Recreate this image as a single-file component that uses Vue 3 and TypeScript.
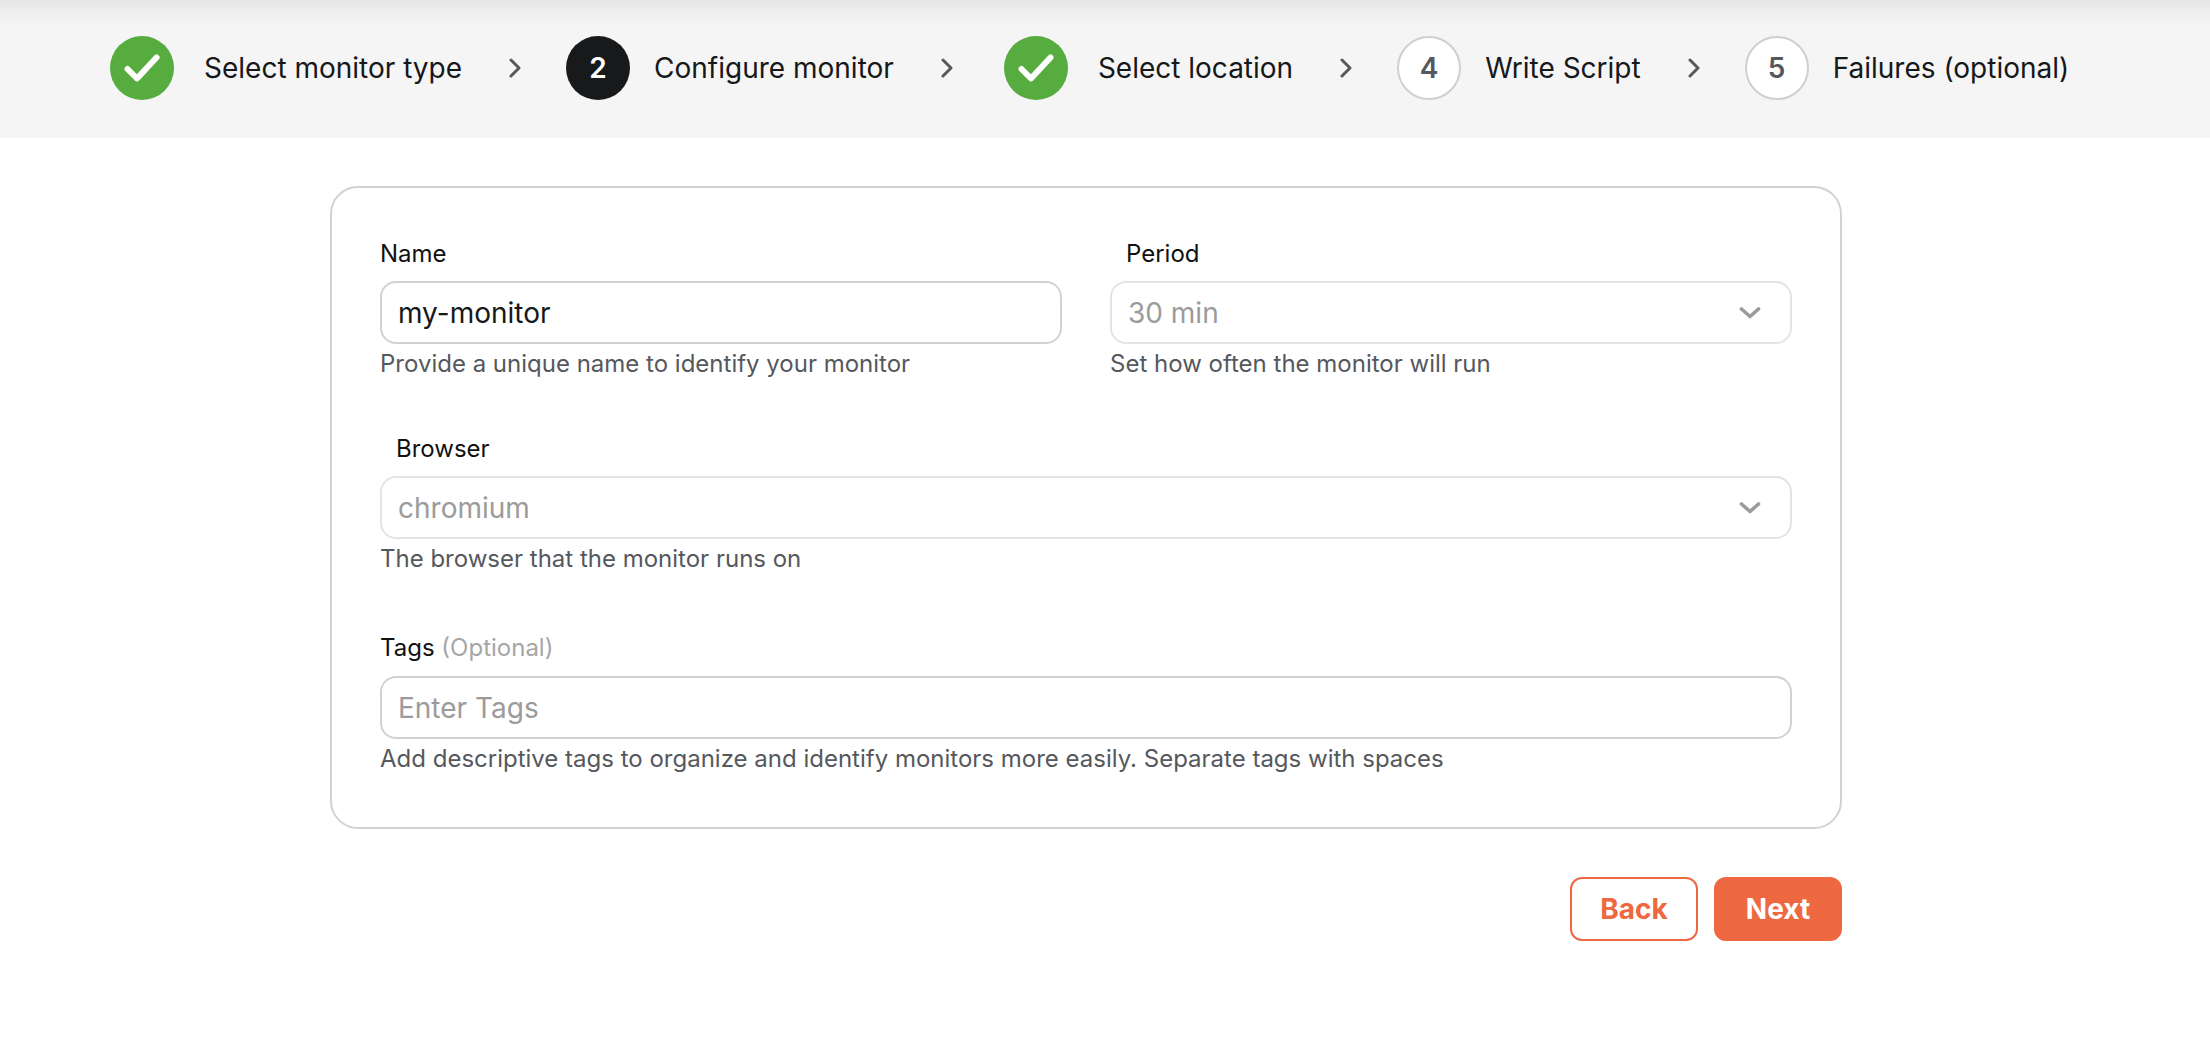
<script setup lang="ts">
interface Step {
  label: string;
  num: number;
  state: 'done' | 'active' | 'todo';
}

const steps: Step[] = [
  { label: 'Select monitor type', num: 1, state: 'done' },
  { label: 'Configure monitor', num: 2, state: 'active' },
  { label: 'Select location', num: 3, state: 'done' },
  { label: 'Write Script', num: 4, state: 'todo' },
  { label: 'Failures (optional)', num: 5, state: 'todo' },
];
</script>

<template>
  <div class="page">
    <header class="stepper">
      <template v-for="(step, i) in steps" :key="step.num">
        <div class="step" :class="step.state">
          <span class="badge">
            <svg v-if="step.state === 'done'" width="36" height="28" viewBox="0 0 36 28" fill="none">
              <path d="M3.5 15 L13 24.5 L32.5 3.5" stroke="#fff" stroke-width="6" stroke-linecap="round" stroke-linejoin="round" />
            </svg>
            <template v-else>{{ step.num }}</template>
          </span>
          <span class="step-label">{{ step.label }}</span>
        </div>
        <svg v-if="i < steps.length - 1" class="chevron" width="12" height="20" viewBox="0 0 12 20" fill="none">
          <path d="M2 2 L10 10 L2 18" stroke="#55585d" stroke-width="3" stroke-linecap="round" stroke-linejoin="round" />
        </svg>
      </template>
    </header>

    <main class="content">
      <section class="card">
        <div class="row two">
          <div class="field">
            <label class="label">Name</label>
            <input class="control" type="text" value="my-monitor" />
            <p class="hint">Provide a unique name to identify your monitor</p>
          </div>
          <div class="field">
            <label class="label indent">Period</label>
            <div class="control select">
              <span>30 min</span>
              <svg width="22" height="14" viewBox="0 0 22 14" fill="none">
                <path d="M2.5 3 L11 10.5 L19.5 3" stroke="#9b9b9b" stroke-width="3.6" stroke-linecap="round" stroke-linejoin="round" />
              </svg>
            </div>
            <p class="hint">Set how often the monitor will run</p>
          </div>
        </div>

        <div class="field browser">
          <label class="label indent">Browser</label>
          <div class="control select">
            <span>chromium</span>
            <svg width="22" height="14" viewBox="0 0 22 14" fill="none">
              <path d="M2.5 3 L11 10.5 L19.5 3" stroke="#9b9b9b" stroke-width="3.6" stroke-linecap="round" stroke-linejoin="round" />
            </svg>
          </div>
          <p class="hint">The browser that the monitor runs on</p>
        </div>

        <div class="field tags">
          <label class="label">Tags <span class="optional">(Optional)</span></label>
          <input class="control" type="text" placeholder="Enter Tags" />
          <p class="hint">Add descriptive tags to organize and identify monitors more easily. Separate tags with spaces</p>
        </div>
      </section>

      <div class="actions">
        <button class="btn outline">Back</button>
        <button class="btn solid">Next</button>
      </div>
    </main>
  </div>
</template>

<style scoped>
.page {
  font-family: Inter, 'Liberation Sans', sans-serif;
  color: #161819;
  min-height: 1058px;
  background: #fff;
}
.stepper {
  height: 138px;
  box-sizing: border-box;
  padding: 0 0 2px 110px;
  display: flex;
  align-items: center;
  background: linear-gradient(#e5e5e5 0, #f0f0f0 14px, #f5f5f5 26px);
}
.step {
  display: flex;
  align-items: center;
  gap: 24px;
}
.step.done {
  gap: 30px;
}
.chevron + .step.done {
  margin-left: 6px;
}
.badge {
  width: 64px;
  height: 64px;
  box-sizing: border-box;
  border-radius: 50%;
  display: flex;
  align-items: center;
  justify-content: center;
  font-size: 28px;
  font-weight: 600;
}
.done .badge {
  background: #57ac3f;
}
.active .badge {
  background: #17191b;
  color: #fff;
}
.todo .badge {
  background: #fff;
  border: 2px solid #cfcfcf;
  color: #55585d;
}
.step-label {
  font-size: 28px;
  white-space: nowrap;
}
.chevron {
  margin: 0 45px 0 47px;
  flex: none;
}
.content {
  width: 1512px;
  margin: 48px 0 0 330px;
}
.card {
  box-sizing: border-box;
  height: 643px;
  border: 2px solid #d2d2d2;
  border-radius: 28px;
  padding: 51px 48px 0;
  display: flex;
  flex-direction: column;
}
.row.two {
  display: grid;
  grid-template-columns: 1fr 1fr;
  gap: 48px;
  margin-bottom: 55px;
}
.field {
  display: flex;
  flex-direction: column;
}
.field.browser {
  margin-bottom: 59px;
}
.label {
  font-size: 24px;
  font-weight: 400;
  line-height: 30px;
  color: #111;
  margin-bottom: 12px;
}
.tags .label {
  margin-bottom: 13px;
}
.label.indent {
  padding-left: 16px;
}
.optional {
  color: #a6a6a6;
  font-weight: 400;
}
.control {
  box-sizing: border-box;
  width: 100%;
  height: 63px;
  border: 2px solid #d2d2d2;
  border-radius: 16px;
  padding: 0 16px;
  background: #fff;
  font-family: inherit;
  font-size: 28px;
  color: #161819;
  outline: none;
}
.control::placeholder {
  color: #9b9b9b;
  opacity: 1;
}
.select {
  display: flex;
  align-items: center;
  justify-content: space-between;
  border-color: #e4e4e4;
  color: #9b9b9b;
  padding-right: 29px;
}
.hint {
  margin: 5px 0 0;
  font-size: 24px;
  line-height: 30px;
  color: #55585d;
}
.actions {
  display: flex;
  justify-content: flex-end;
  gap: 16px;
  margin-top: 48px;
}
.btn {
  width: 128px;
  height: 64px;
  box-sizing: border-box;
  border-radius: 12px;
  font-family: inherit;
  font-size: 28px;
  font-weight: 700;
  border: 2px solid #ee6841;
}
.outline {
  background: #fff;
  color: #ee6841;
}
.solid {
  background: #ee6841;
  color: #fff;
}
</style>
